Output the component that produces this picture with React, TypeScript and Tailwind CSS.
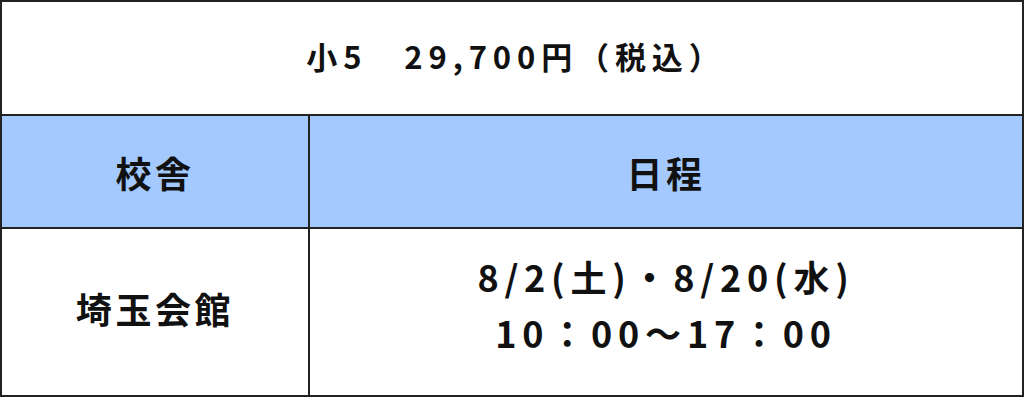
export default function App() {
  return (
    <div className="w-[1024px] h-[404px] bg-white font-['Noto_Sans_CJK_JP','Noto_Sans',sans-serif] text-[#111] font-bold">
      <div className="w-[1024px] border-2 border-[#222]">
        {/* price row */}
        <div className="h-[114px] flex items-center justify-center border-b-2 border-[#222] text-[31px] tracking-[0.19em] pb-1 pl-2">
          小5　29,700円（税込）
        </div>

        {/* header row */}
        <div className="h-[113px] grid grid-cols-[308px_1fr] bg-[#a3c9fe] border-b-2 border-[#222] text-[36px] tracking-[0.1em]">
          <div className="flex items-center justify-center border-r-2 border-[#222]">校舎</div>
          <div className="flex items-center justify-center">日程</div>
        </div>

        {/* body row */}
        <div className="h-[166px] grid grid-cols-[308px_1fr]">
          <div className="flex items-center justify-center border-r-2 border-[#222] text-[36px] tracking-[0.1em] pb-2">
            埼玉会館
          </div>
          <div className="flex flex-col items-center justify-center text-[36px] leading-[56px] tracking-[0.16em] pb-4">
            <span>8/2(土)・8/20(水)</span>
            <span>10：00～17：00</span>
          </div>
        </div>
      </div>
    </div>
  );
}
